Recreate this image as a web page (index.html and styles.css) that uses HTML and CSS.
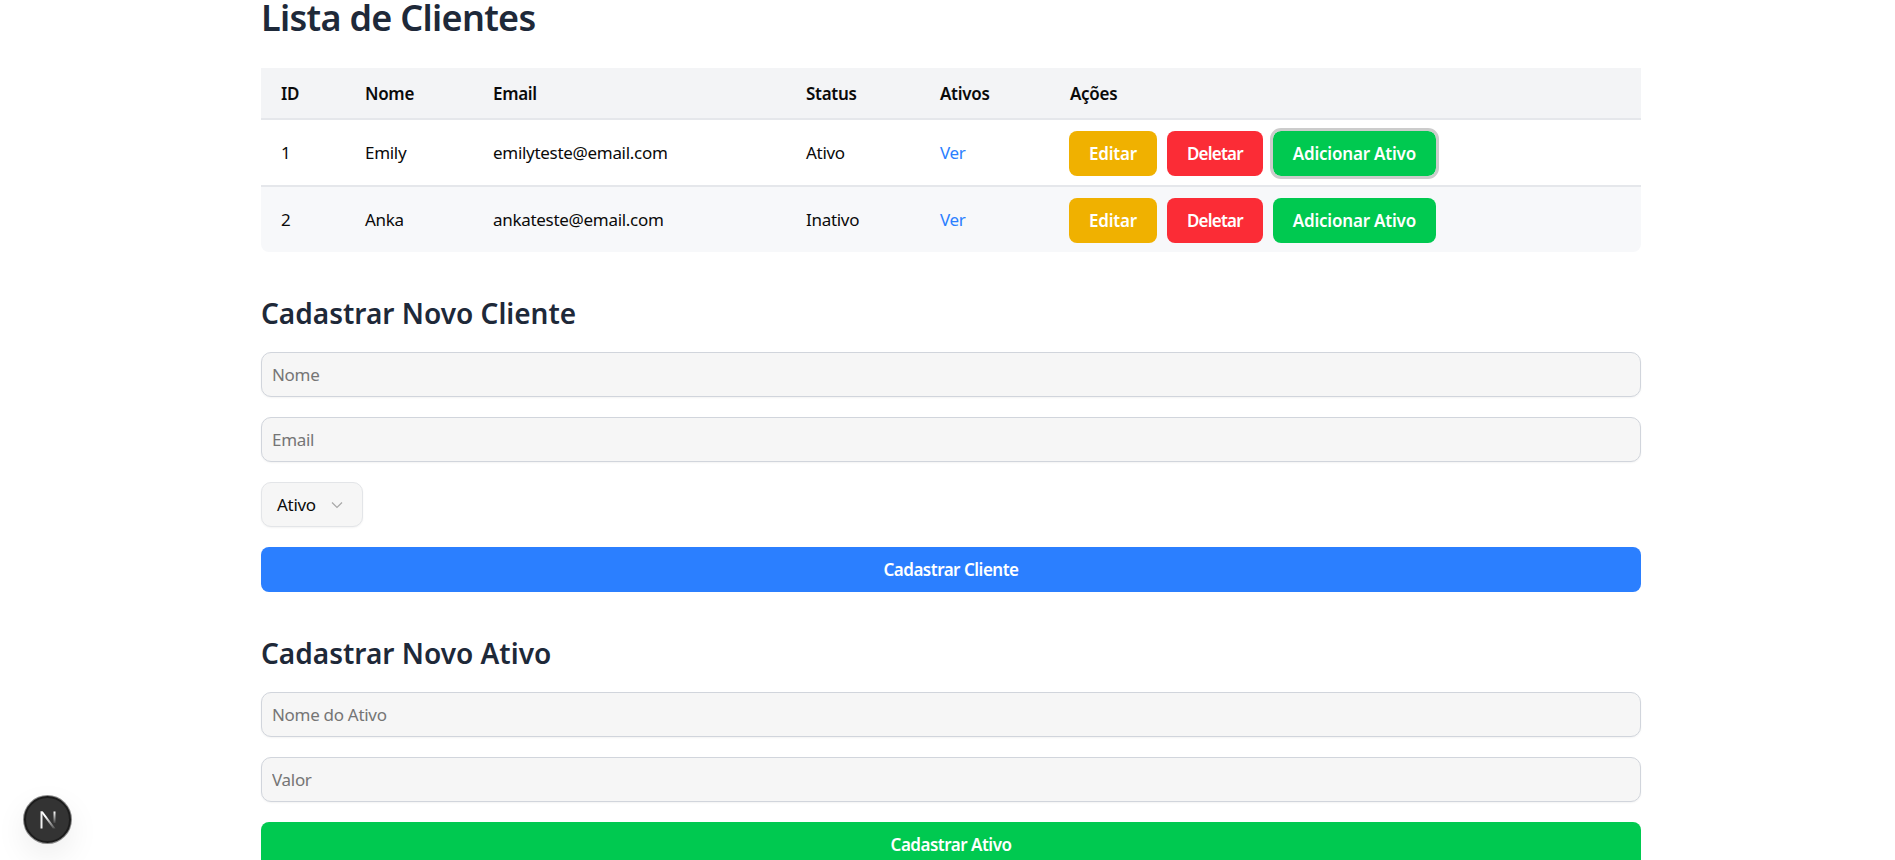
FILE: index.html
```html
<!DOCTYPE html>
<html lang="pt-BR">
<head>
    <meta charset="UTF-8">
    <meta name="viewport" content="width=device-width, initial-scale=1.0">
    <title>Lista de Clientes</title>
    <link rel="stylesheet" href="styles.css">
</head>
<body>
    <main class="page">
        <h1 class="page-title">Lista de Clientes</h1>

        <table class="client-table">
            <colgroup>
                <col class="col-id">
                <col class="col-name">
                <col class="col-email">
                <col class="col-status">
                <col class="col-assets">
                <col>
            </colgroup>
            <thead>
                <tr>
                    <th>ID</th>
                    <th>Nome</th>
                    <th>Email</th>
                    <th>Status</th>
                    <th>Ativos</th>
                    <th>Ações</th>
                </tr>
            </thead>
            <tbody>
                <tr>
                    <td>1</td>
                    <td>Emily</td>
                    <td>emilyteste@email.com</td>
                    <td>Ativo</td>
                    <td><a class="link" href="#">Ver</a></td>
                    <td>
                        <div class="actions">
                            <button type="button" class="btn btn-yellow">Editar</button>
                            <button type="button" class="btn btn-red">Deletar</button>
                            <button type="button" class="btn btn-green btn-focus">Adicionar Ativo</button>
                        </div>
                    </td>
                </tr>
                <tr>
                    <td>2</td>
                    <td>Anka</td>
                    <td>ankateste@email.com</td>
                    <td>Inativo</td>
                    <td><a class="link" href="#">Ver</a></td>
                    <td>
                        <div class="actions">
                            <button type="button" class="btn btn-yellow">Editar</button>
                            <button type="button" class="btn btn-red">Deletar</button>
                            <button type="button" class="btn btn-green">Adicionar Ativo</button>
                        </div>
                    </td>
                </tr>
            </tbody>
        </table>

        <h2 class="section-title">Cadastrar Novo Cliente</h2>
        <form class="form">
            <input type="text" class="field" placeholder="Nome">
            <input type="email" class="field" placeholder="Email">
            <div class="select">
                <span>Ativo</span>
                <svg class="select-arrow" width="12" height="8" viewBox="0 0 12 8"><path d="M1 1.5l5 5 5-5" fill="none" stroke="#a8a8a8" stroke-width="1.2"/></svg>
            </div>
            <button type="button" class="btn btn-blue btn-wide">Cadastrar Cliente</button>
        </form>

        <h2 class="section-title section-title-next">Cadastrar Novo Ativo</h2>
        <form class="form">
            <input type="text" class="field" placeholder="Nome do Ativo">
            <input type="text" class="field" placeholder="Valor">
            <button type="button" class="btn btn-green btn-wide">Cadastrar Ativo</button>
        </form>
    </main>

    <div class="dev-badge">
        <svg width="20" height="20" viewBox="0 0 20 20">
            <defs>
                <linearGradient id="fade" x1="0" y1="0" x2="0" y2="1">
                    <stop offset="0.3" stop-color="#fff"/>
                    <stop offset="1" stop-color="#fff" stop-opacity="0.15"/>
                </linearGradient>
                <linearGradient id="fade-right" x1="0" y1="0" x2="0" y2="1">
                    <stop offset="0" stop-color="#fff"/>
                    <stop offset="1" stop-color="#fff" stop-opacity="0.1"/>
                </linearGradient>
            </defs>
            <path d="M2.5 1.5h2V18.5h-2z" fill="#f0f0f0"/>
            <path d="M2.5 1.5h2.4L17.5 18.5h-2.6z" fill="url(#fade)"/>
            <path d="M15.5 1.5h2V13h-2z" fill="url(#fade-right)"/>
        </svg>
    </div>
</body>
</html>
```

FILE: styles.css
```css
/* Geral */
html, body {
    height: 100%;
    overflow: hidden;
}

body {
    margin: 0;
    background-color: #ffffff;
    font-family: "Noto Sans", Arial, sans-serif;
    font-size: 17px;
    letter-spacing: -0.3px;
    color: #0a0a0a;
}

.page {
    width: 1380px;
    margin-left: 261px;
}

/* Titulos */
.page-title {
    margin: 0;
    height: 68px;
    font-size: 36px;
    line-height: 36px;
    font-weight: 600;
    letter-spacing: -0.7px;
    color: #1e2939;
}

.section-title {
    margin: 0 0 19px;
    padding-top: 42px;
    font-size: 28px;
    line-height: 39px;
    font-weight: 600;
    letter-spacing: 0;
    color: #1e2939;
}

.section-title-next {
    padding-top: 42px;
}

/* Tabela */
.client-table {
    width: 100%;
    table-layout: fixed;
    border-collapse: collapse;
    overflow: hidden;
    border-bottom-left-radius: 8px;
    border-bottom-right-radius: 8px;
}

.col-id { width: 84px; }
.col-name { width: 128px; }
.col-email { width: 313px; }
.col-status { width: 134px; }
.col-assets { width: 130px; }

.client-table th {
    height: 50px;
    padding: 0 20px;
    background-color: #f3f4f6;
    border-bottom: 2px solid #e5e7eb;
    text-align: left;
    font-weight: 600;
}

.client-table td {
    height: 65px;
    padding: 0 20px;
    border-bottom: 2px solid #e5e7eb;
}

.client-table tbody tr:nth-child(2) td {
    background-color: #f7f8fa;
    border-bottom: none;
}

.link {
    color: #2b7fff;
    text-decoration: none;
}

/* Botoes */
.actions {
    display: flex;
    gap: 10px;
    padding-top: 2px;
    margin-left: -1px;
}

.btn {
    height: 45px;
    padding: 0 20px;
    border: none;
    border-radius: 8px;
    font-family: inherit;
    font-size: 17px;
    font-weight: 600;
    letter-spacing: -0.2px;
    color: #ffffff;
    cursor: pointer;
}

.btn-yellow { background-color: #f0b100; }
.btn-red {
    background-color: #fb2c36;
    letter-spacing: -0.8px;
}
.btn-green { background-color: #00c950; }
.btn-blue { background-color: #2b7fff; }
.btn-wide {
    width: 100%;
    letter-spacing: -0.5px;
}

.btn-focus {
    outline: 3px solid #cccccc;
    outline-offset: 0;
}

/* Formularios */
.form {
    display: flex;
    flex-direction: column;
    align-items: flex-start;
    gap: 20px;
}

.field {
    box-sizing: border-box;
    width: 100%;
    height: 45px;
    padding: 0 10px;
    background-color: #f6f6f6;
    border: 1px solid #d1d5dc;
    border-radius: 10px;
    box-shadow: 0 1px 2px rgba(0, 0, 0, 0.05);
    font-family: inherit;
    font-size: 17px;
    letter-spacing: -0.3px;
}

.field::placeholder {
    color: #757575;
}

.select {
    box-sizing: border-box;
    display: flex;
    align-items: center;
    justify-content: space-between;
    width: 102px;
    height: 45px;
    padding: 0 19px 0 15px;
    background-color: #f6f6f6;
    border: 1px solid #e3e5e8;
    border-radius: 10px;
    box-shadow: 0 1px 2px rgba(0, 0, 0, 0.05);
}

/* Indicador do Next */
.dev-badge {
    position: fixed;
    left: 24px;
    bottom: 17px;
    display: flex;
    align-items: center;
    justify-content: center;
    width: 47px;
    height: 47px;
    box-sizing: border-box;
    border-radius: 50%;
    background-color: #333333;
    border: 2px solid #1c1c1c;
    box-shadow: 0 0 0 1px #8a8a8a, 0 12px 32px rgba(0, 0, 0, 0.08);
}
```
